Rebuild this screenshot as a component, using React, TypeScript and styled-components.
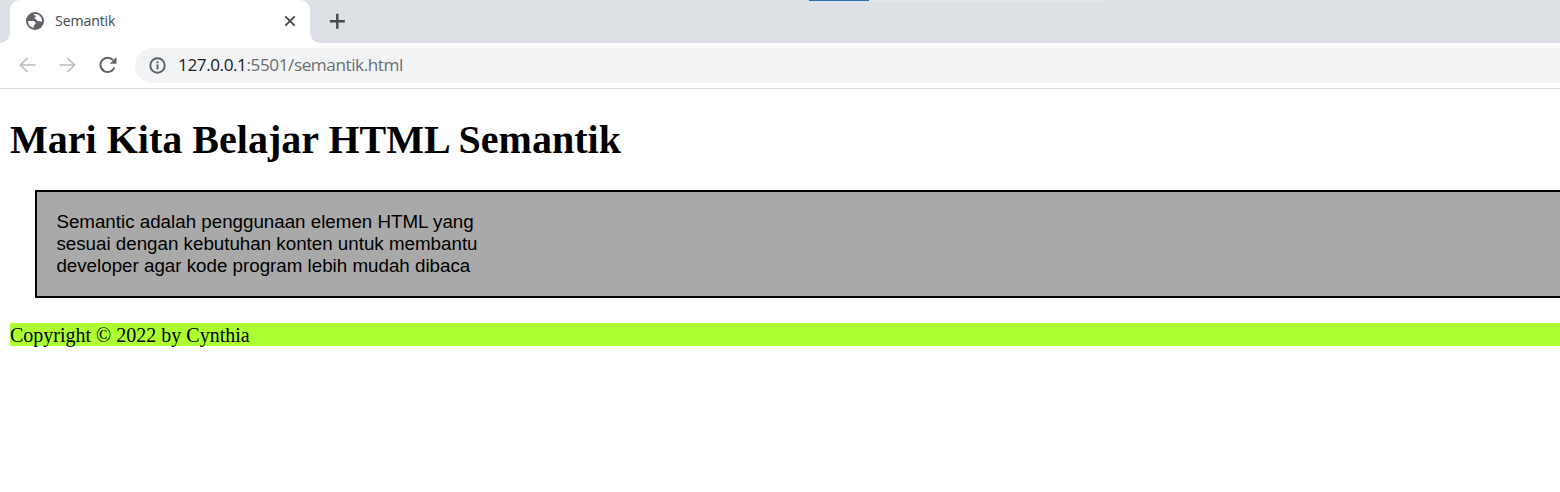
import React from 'react';
import styled, { createGlobalStyle } from 'styled-components';

const GlobalStyle = createGlobalStyle`
  * { box-sizing: border-box; }
  body { margin: 0; background: #fff; overflow: hidden; }
`;

const Window = styled.div`
  height: 492px;
  overflow: hidden;
  background: #fff;
`;

const TabStrip = styled.div`
  position: relative;
  display: flex;
  height: 43px;
  padding-left: 10px;
  background: #dde1e6;
`;

const LoadingBar = styled.div`
  position: absolute;
  top: 0;
  left: 809px;
  width: 60px;
  height: 1px;
  background: #2b70ae;
`;

const BarTrail = styled(LoadingBar)`
  left: 869px;
  width: 240px;
  background: #e4e7ea;
`;

const Tab = styled.div`
  position: relative;
  display: flex;
  align-items: center;
  width: 300px;
  padding: 0 14px 1px 16px;
  color: #45494d;
  background: #fff;
  border-radius: 10px 10px 0 0;

  &::before,
  &::after {
    content: '';
    position: absolute;
    bottom: 0;
    width: 10px;
    height: 10px;
  }
  &::before {
    left: -10px;
    background: radial-gradient(circle at 0 0, transparent 9.5px, #fff 10.2px);
  }
  &::after {
    right: -10px;
    background: radial-gradient(circle at 100% 0, transparent 9.5px, #fff 10.2px);
  }
`;

const TabTitle = styled.span`
  flex: 1;
  margin-left: 11px;
  font: 14.2px/20px 'Open Sans', sans-serif;
  letter-spacing: -0.15px;
`;

const Glyph = styled.svg`
  display: block;
  flex: none;
  fill: none;
  stroke: currentColor;
`;

const NewTab = styled.div`
  display: flex;
  align-items: center;
  padding: 0 0 1px 19px;
  color: #45494d;
`;

const Toolbar = styled.div`
  display: flex;
  align-items: center;
  height: 46px;
  padding: 0 0 1px 19px;
  border-bottom: 1px solid #dadce0;
`;

const NavButton = styled.div<{ $muted?: boolean; $gap: number }>`
  margin-right: ${(p) => p.$gap}px;
  color: ${(p) => (p.$muted ? '#babcbe' : '#5f6368')};
`;

const AddressBar = styled.div`
  display: flex;
  align-items: center;
  flex: 1;
  height: 35px;
  padding-left: 14px;
  color: #5f6368;
  background: #f1f3f4;
  border-radius: 18px 0 0 18px;
`;

const Url = styled.span`
  margin-left: 12px;
  font: 17.2px/24px 'Open Sans', sans-serif;
  letter-spacing: -0.45px;
  white-space: nowrap;
  color: #6b6f73;
`;

const Host = styled.span`
  color: #202124;
`;

const Page = styled.main`
  padding: 28px 0 0 10px;
`;

const Title = styled.h1`
  margin: 0 0 27px;
  font: bold 40px/46px 'Liberation Serif', 'Times New Roman', serif;
  letter-spacing: 0.02px;
  color: #000;
  white-space: nowrap;
`;

const Article = styled.article`
  height: 108px;
  margin-left: 25px;
  padding: 19px 19.4px;
  border: 2px solid #000;
  border-right: 0;
  background: #a9a9a9;
`;

const Paragraph = styled.p`
  margin: 0;
  width: 450px;
  font: 18.75px/22px 'Liberation Sans', Arial, sans-serif;
  white-space: nowrap;
  color: #000;
`;

const Footer = styled.footer`
  height: 23px;
  margin-top: 25px;
  font: 20px/25px 'Liberation Serif', 'Times New Roman', serif;
  color: #000;
  background: #adff2f;
`;

export default function App() {
  return (
    <Window>
      <GlobalStyle />
      <TabStrip>
        <Tab>
          <Glyph width="18" height="18" viewBox="0 0 18 18">
            <circle cx="9" cy="9" r="9" fill="#5f6368" stroke="none" />
            <path
              d="M7.4 2.2C10.5 1.3 13.4 2.5 15 5.2c.9 1.6 1.1 3.4.8 4.9-1-.2-1.5-.9-2.5-.8-1.500-.1-2.600-.4-2.700-1.500-.6-1.100-2-.3-2.100-1.500.1-1.300 1.500-1 1.500-2.200-.4-.9-1.900-.5-2.600-1.900z"
              fill="#fff"
              stroke="none"
            />
            <path
              d="M2.100 9h4.700c1.800.1 2.800 1.200 2.900 2.600-.1 1.100-1.700 1-1.900 2.200l-.2 2C4.200 15.200 2 12.500 2.100 9z"
              fill="#fff"
              stroke="none"
            />
          </Glyph>
          <TabTitle>Semantik</TabTitle>
          <Glyph width="12" height="12" viewBox="0 0 12 12" strokeWidth="1.9">
            <path d="M1.3 1.3l9.4 9.4M10.7 1.3l-9.4 9.4" />
          </Glyph>
        </Tab>
        <NewTab>
          <Glyph width="16" height="16" viewBox="0 0 16 16" strokeWidth="2.4">
            <path d="M8.3 .7v15M.8 8.200h15" />
          </Glyph>
        </NewTab>
        <LoadingBar />
        <BarTrail />
      </TabStrip>
      <Toolbar>
        <NavButton $muted $gap={23}>
          <Glyph width="17" height="17" viewBox="0 0 17 17" strokeWidth="1.7">
            <path d="M16.500 8H1.800M8.500 1L1.500 8l7 7" />
          </Glyph>
        </NavButton>
        <NavButton $muted $gap={23}>
          <Glyph width="17" height="17" viewBox="0 0 17 17" strokeWidth="1.7">
            <path d="M.5 8h14.700M8.500 1l7 7-7 7" />
          </Glyph>
        </NavButton>
        <NavButton $gap={17}>
          <Glyph width="19" height="18" viewBox="0 0 19 18" strokeWidth="2">
            <path d="M15.400 11.500A7.200 7.200 0 1 1 14 4" />
            <path d="M17.500 1v6.700h-6.700z" fill="currentColor" stroke="none" />
          </Glyph>
        </NavButton>
        <AddressBar>
          <Glyph width="17" height="17" viewBox="0 0 17 17" strokeWidth="2">
            <circle cx="8.5" cy="8.5" r="7.2" />
            <path d="M8.5 7.600v5M8.500 4.300v1.900" />
          </Glyph>
          <Url>
            <Host>127.0.0.1</Host>:5501/semantik.html
          </Url>
        </AddressBar>
      </Toolbar>
      <Page>
        <Title>Mari Kita Belajar HTML Semantik</Title>
        <Article>
          <Paragraph>
            Semantic adalah penggunaan elemen HTML yang
            <br />
            sesuai dengan kebutuhan konten untuk membantu
            <br />
            developer agar kode program lebih mudah dibaca
          </Paragraph>
        </Article>
        <Footer>Copyright © 2022 by Cynthia</Footer>
      </Page>
    </Window>
  );
}
